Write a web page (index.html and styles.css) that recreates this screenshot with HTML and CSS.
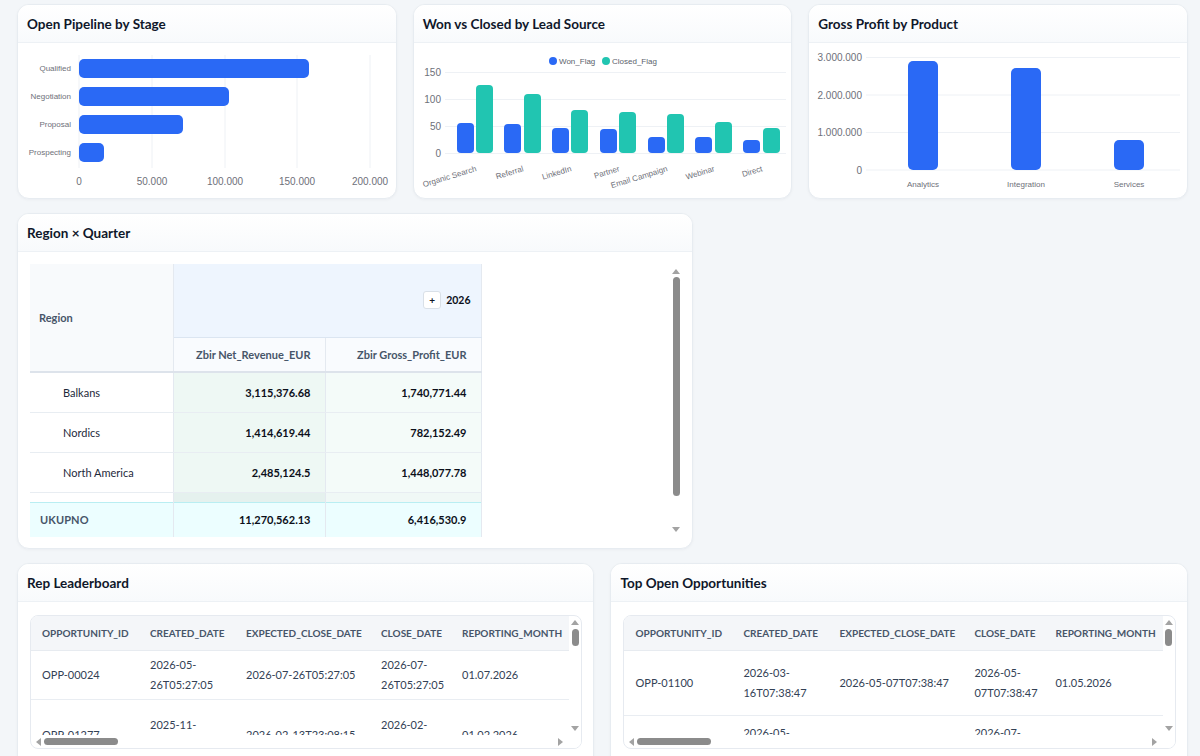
FILE: index.html
```html
<!DOCTYPE html>
<html lang="en">
<head>
<meta charset="utf-8">
<title>Sales Dashboard</title>
<link rel="stylesheet" href="styles.css">
</head>
<body>
<main class="dash">

  <section class="card span4">
    <header class="card-h"><h2>Open Pipeline by Stage</h2></header>
    <div class="card-b chart">
      <svg width="378" height="155" viewBox="0 0 378 155">
        <g class="grid">
          <line x1="61" y1="12" x2="61" y2="125"/>
          <line x1="134" y1="12" x2="134" y2="125"/>
          <line x1="207" y1="12" x2="207" y2="125"/>
          <line x1="279" y1="12" x2="279" y2="125"/>
          <line x1="352" y1="12" x2="352" y2="125"/>
        </g>
        <g class="bar-blue">
          <rect x="61" y="16" width="230" height="19" rx="5"/>
          <rect x="61" y="44" width="150" height="19" rx="5"/>
          <rect x="61" y="72" width="104" height="19" rx="5"/>
          <rect x="61" y="100" width="25" height="19" rx="5"/>
        </g>
        <g class="lbl-s" text-anchor="end">
          <text x="53" y="28">Qualified</text>
          <text x="53" y="56">Negotiation</text>
          <text x="53" y="84">Proposal</text>
          <text x="53" y="112">Prospecting</text>
        </g>
        <g class="lbl" text-anchor="middle">
          <text x="61" y="142">0</text>
          <text x="134" y="142">50.000</text>
          <text x="207" y="142">100.000</text>
          <text x="279" y="142">150.000</text>
          <text x="352" y="142">200.000</text>
        </g>
      </svg>
    </div>
  </section>

  <section class="card span4">
    <header class="card-h"><h2>Won vs Closed by Lead Source</h2></header>
    <div class="card-b chart">
      <svg width="378" height="155" viewBox="0 0 378 155">
        <g class="legend">
          <circle cx="139" cy="18" r="4" class="dot-blue"/>
          <text x="145" y="21">Won_Flag</text>
          <circle cx="192" cy="18" r="4" class="dot-teal"/>
          <text x="198" y="21">Closed_Flag</text>
        </g>
        <g class="grid">
          <line x1="31" y1="29.5" x2="372" y2="29.5"/>
          <line x1="31" y1="56.5" x2="372" y2="56.5"/>
          <line x1="31" y1="83.5" x2="372" y2="83.5"/>
          <line x1="31" y1="110.5" x2="372" y2="110.5"/>
        </g>
        <g class="lbl" text-anchor="end">
          <text x="27" y="33">150</text>
          <text x="27" y="60">100</text>
          <text x="27" y="87">50</text>
          <text x="27" y="114">0</text>
        </g>
        <g class="bar-blue">
          <rect x="43" y="80" width="17" height="30" rx="4"/>
          <rect x="90" y="81" width="17" height="29" rx="4"/>
          <rect x="138" y="85" width="17" height="25" rx="4"/>
          <rect x="186" y="86" width="17" height="24" rx="4"/>
          <rect x="234" y="94" width="17" height="16" rx="4"/>
          <rect x="281" y="94" width="17" height="16" rx="4"/>
          <rect x="329" y="97" width="17" height="13" rx="4"/>
        </g>
        <g class="bar-teal">
          <rect x="62" y="42" width="17" height="68" rx="4"/>
          <rect x="110" y="51" width="17" height="59" rx="4"/>
          <rect x="157" y="67" width="17" height="43" rx="4"/>
          <rect x="205" y="69" width="17" height="41" rx="4"/>
          <rect x="253" y="71" width="17" height="39" rx="4"/>
          <rect x="301" y="79" width="17" height="31" rx="4"/>
          <rect x="349" y="85" width="17" height="25" rx="4"/>
        </g>
        <g class="lbl-s" text-anchor="end">
          <text transform="translate(63 128) rotate(-17)">Organic Search</text>
          <text transform="translate(110 128) rotate(-17)">Referral</text>
          <text transform="translate(158 128) rotate(-17)">LinkedIn</text>
          <text transform="translate(206 128) rotate(-17)">Partner</text>
          <text transform="translate(254 128) rotate(-17)">Email Campaign</text>
          <text transform="translate(301 128) rotate(-17)">Webinar</text>
          <text transform="translate(349 128) rotate(-17)">Direct</text>
        </g>
      </svg>
    </div>
  </section>

  <section class="card span4">
    <header class="card-h"><h2>Gross Profit by Product</h2></header>
    <div class="card-b chart">
      <svg width="378" height="155" viewBox="0 0 378 155">
        <g class="grid">
          <line x1="57" y1="14.5" x2="371" y2="14.5"/>
          <line x1="57" y1="52" x2="371" y2="52"/>
          <line x1="57" y1="89.5" x2="371" y2="89.5"/>
          <line x1="57" y1="127" x2="371" y2="127"/>
        </g>
        <g class="lbl" text-anchor="end">
          <text x="53" y="18">3.000.000</text>
          <text x="53" y="55.5">2.000.000</text>
          <text x="53" y="93">1.000.000</text>
          <text x="53" y="130.5">0</text>
        </g>
        <g class="bar-blue">
          <rect x="99" y="18" width="30" height="109" rx="5"/>
          <rect x="202" y="25" width="30" height="102" rx="5"/>
          <rect x="305" y="97" width="30" height="30" rx="5"/>
        </g>
        <g class="lbl-s" text-anchor="middle">
          <text x="114" y="144">Analytics</text>
          <text x="217" y="144">Integration</text>
          <text x="320" y="144">Services</text>
        </g>
      </svg>
    </div>
  </section>

  <section class="card span7 pivot-card">
    <header class="card-h"><h2>Region × Quarter</h2></header>
    <div class="card-b pivot-body">
      <div class="pivot-view">
        <table class="pivot">
          <colgroup><col class="pc-region"><col class="pc-val"><col class="pc-val2"></colgroup>
          <thead>
            <tr class="ph1">
              <th rowspan="2" class="ph-region">Region</th>
              <th colspan="2" class="ph-year"><span class="year-wrap"><span class="plus-btn">+</span><span class="year">2026</span></span></th>
            </tr>
            <tr class="ph2">
              <th class="ph-measure">Zbir Net_Revenue_EUR</th>
              <th class="ph-measure">Zbir Gross_Profit_EUR</th>
            </tr>
          </thead>
          <tbody>
            <tr class="pr"><td class="pr-label">Balkans</td><td class="pv pv1">3,115,376.68</td><td class="pv pv2">1,740,771.44</td></tr>
            <tr class="pr"><td class="pr-label">Nordics</td><td class="pv pv1">1,414,619.44</td><td class="pv pv2">782,152.49</td></tr>
            <tr class="pr"><td class="pr-label">North America</td><td class="pv pv1">2,485,124.5</td><td class="pv pv2">1,448,077.78</td></tr>
            <tr class="pr-gap"><td class="pr-label"></td><td class="pv1g"></td><td class="pv2g"></td></tr>
          </tbody>
          <tfoot>
            <tr class="ptot"><td class="ptot-label">UKUPNO</td><td class="pv">11,270,562.13</td><td class="pv">6,416,530.9</td></tr>
          </tfoot>
        </table>
      </div>
      <div class="vscroll pivot-vs">
        <span class="arr arr-up"></span>
        <span class="vtrack"><span class="vthumb pivot-thumb"></span></span>
        <span class="arr arr-down"></span>
      </div>
    </div>
  </section>

  <section class="card row3-left">
    <header class="card-h"><h2>Rep Leaderboard</h2></header>
    <div class="card-b tbl-body">
      <div class="tbl-wrap">
        <div class="tbl-view">
          <table class="grid-tbl">
            <colgroup><col class="tc1"><col class="tc2"><col class="tc3"><col class="tc4"><col class="tc5"><col class="tc6"><col class="tc7"></colgroup>
            <thead><tr><th>OPPORTUNITY_ID</th><th>CREATED_DATE</th><th>EXPECTED_CLOSE_DATE</th><th>CLOSE_DATE</th><th>REPORTING_MONTH</th><th>REGION</th><th>STAGE</th></tr></thead>
            <tbody>
              <tr class="h49"><td>OPP-00024</td><td>2026-05-26T05:27:05</td><td class="nw">2026-07-26T05:27:05</td><td>2026-07-26T05:27:05</td><td>01.07.2026</td><td>Balkans</td><td>Closed Won</td></tr>
              <tr class="h72"><td>OPP-01277</td><td>2025-11-13T23:08:15</td><td class="nw">2026-02-13T23:08:15</td><td>2026-02-13T23:08:15</td><td>01.02.2026</td><td>Nordics</td><td>Closed Won</td></tr>
            </tbody>
          </table>
        </div>
        <div class="vscroll tbl-vs">
          <span class="arr arr-up"></span>
          <span class="vtrack"><span class="vthumb tbl-thumb"></span></span>
          <span class="arr arr-down"></span>
        </div>
        <div class="hscroll">
          <span class="arr arr-left"></span>
          <span class="htrack"><span class="hthumb"></span></span>
          <span class="arr arr-right"></span>
        </div>
        <div class="corner"></div>
      </div>
    </div>
  </section>

  <section class="card row3-right">
    <header class="card-h"><h2>Top Open Opportunities</h2></header>
    <div class="card-b tbl-body">
      <div class="tbl-wrap">
        <div class="tbl-view">
          <table class="grid-tbl">
            <colgroup><col class="tc1"><col class="tc2"><col class="tc3"><col class="tc4"><col class="tc5"><col class="tc6"><col class="tc7"></colgroup>
            <thead><tr><th>OPPORTUNITY_ID</th><th>CREATED_DATE</th><th>EXPECTED_CLOSE_DATE</th><th>CLOSE_DATE</th><th>REPORTING_MONTH</th><th>REGION</th><th>STAGE</th></tr></thead>
            <tbody>
              <tr class="h65"><td>OPP-01100</td><td>2026-03-16T07:38:47</td><td class="nw">2026-05-07T07:38:47</td><td>2026-05-07T07:38:47</td><td>01.05.2026</td><td>North America</td><td>Negotiation</td></tr>
              <tr class="h56"><td>OPP-00871</td><td>2026-05-02T11:14:32</td><td class="nw">2026-07-02T11:14:32</td><td>2026-07-02T11:14:32</td><td>01.07.2026</td><td>Balkans</td><td>Proposal</td></tr>
            </tbody>
          </table>
        </div>
        <div class="vscroll tbl-vs">
          <span class="arr arr-up"></span>
          <span class="vtrack"><span class="vthumb tbl-thumb"></span></span>
          <span class="arr arr-down"></span>
        </div>
        <div class="hscroll">
          <span class="arr arr-left"></span>
          <span class="htrack"><span class="hthumb"></span></span>
          <span class="arr arr-right"></span>
        </div>
        <div class="corner"></div>
      </div>
    </div>
  </section>

</main>
</body>
</html>
```

FILE: styles.css
```css
* { box-sizing: border-box; margin: 0; padding: 0; }

html, body {
  width: 1200px;
  height: 756px;
  overflow: hidden;
  background: #f3f6f9;
  font-family: Lato, "Liberation Sans", Arial, sans-serif;
  color: #0f172a;
}

.dash {
  display: grid;
  grid-template-columns: repeat(12, minmax(0, 1fr));
  grid-template-rows: 195px 336px 240px;
  column-gap: 16px;
  row-gap: 14px;
  padding: 4px 12px 0 17px;
}

.span4 { grid-column: span 4; }
.span7 { grid-column: 1 / span 7; }
.row3-left { grid-column: 1 / span 6; grid-row: 3; }
.row3-right { grid-column: 7 / span 6; grid-row: 3; }

.card {
  background: #fff;
  border: 1px solid #e7ecf1;
  border-radius: 12px;
  box-shadow: 0 1px 3px rgba(15, 23, 42, 0.04);
  overflow: hidden;
  display: flex;
  flex-direction: column;
  min-width: 0;
}

.card-h {
  flex: none;
  height: 38px;
  padding: 0 9px;
  display: flex;
  align-items: center;
  background: linear-gradient(#ffffff, #f8fafc);
  border-bottom: 1px solid #edf1f5;
}

.card-h h2 {
  font-size: 13.5px;
  font-weight: 700;
  color: #0f172a;
  letter-spacing: 0;
}

.card-b { flex: 1; min-height: 0; }

/* charts */
.chart svg { display: block; overflow: visible; }
.grid line { stroke: #eef1f5; stroke-width: 1; }
.bar-blue rect, .dot-blue { fill: #2a69f5; }
.bar-teal rect, .dot-teal { fill: #21c5b1; }
.lbl text { font-family: "Liberation Sans", Arial, sans-serif; font-size: 10px; fill: #6e7079; }
.lbl-s text, .legend text { font-family: "Liberation Sans", Arial, sans-serif; font-size: 8px; fill: #6e7079; }
.legend text { fill: #5b5f6b; }

/* pivot */
.pivot-body {
  display: flex;
  padding: 12px 10px 11px 12px;
}

.pivot-view { flex: 1; overflow: hidden; }

.pivot {
  border-collapse: collapse;
  table-layout: fixed;
  width: 451px;
}

.pc-region { width: 143px; }
.pc-val { width: 152px; }
.pc-val2 { width: 156px; }

.pivot th, .pivot td {
  font-size: 11px;
  border-right: 1px solid #e4e9f0;
}

.ph1 { height: 73px; }
.ph2 { height: 35px; }

.ph-region {
  background: #f8fafc;
  text-align: left;
  padding-left: 9px;
  font-size: 10px;
  font-weight: 700;
  color: #475569;
  border-bottom: 2px solid #dde3eb;
}

.ph-year {
  background: #eef5fe;
  text-align: right;
  padding-right: 10px;
  border-bottom: 1px solid #dbe5f1;
}

.year-wrap { display: inline-flex; align-items: center; gap: 5px; }

.plus-btn {
  width: 18px;
  height: 18px;
  display: inline-flex;
  align-items: center;
  justify-content: center;
  background: #fff;
  border: 1px solid #d9e0e8;
  border-radius: 3px;
  font-size: 10px;
  font-weight: 700;
  color: #111827;
}

.year { font-size: 10.5px; font-weight: 700; color: #0b0f19; }

.ph-measure {
  background: #f9fbfe;
  text-align: right;
  padding-right: 14px;
  font-size: 10px;
  font-weight: 700;
  color: #475569;
  border-bottom: 2px solid #dde3eb;
}

.pr { height: 40px; }
.pr td { border-bottom: 1px solid #e8edf2; }

.pr-label {
  padding-left: 33px;
  font-size: 11.5px;
  color: #1e293b;
  background: #fff;
}

.pv {
  text-align: right;
  padding-right: 14px;
  font-size: 11.5px;
  font-weight: 700;
  color: #0b0f19;
}

.pv1 { background: #eef8f4; }
.pv2 { background: #f4fbf9; }

.pr-gap { height: 10px; }
.pr-gap td { padding: 0; }
.pv1g { background: #e5f1ee; }
.pv2g { background: #f0f8f6; }

.ptot { height: 35px; }
.ptot td {
  background: #ecfeff;
  border-top: 1px solid #b9eef2;
}

.ptot-label {
  padding-left: 10px;
  font-size: 8.5px;
  font-weight: 700;
  color: #475569;
  letter-spacing: 0.1px;
}

/* fake scrollbars */
.vscroll {
  flex: none;
  width: 12px;
  display: flex;
  flex-direction: column;
  align-items: center;
}

.vtrack { flex: 1; width: 100%; display: flex; justify-content: center; }
.vthumb { display: block; width: 7px; background: #8b8b8b; border-radius: 4px; }

.arr { display: block; width: 0; height: 0; flex: none; }
.arr-up { border-left: 4px solid transparent; border-right: 4px solid transparent; border-bottom: 5px solid #a3a3a3; }
.arr-down { border-left: 4px solid transparent; border-right: 4px solid transparent; border-top: 5px solid #a3a3a3; }
.arr-left { border-top: 4px solid transparent; border-bottom: 4px solid transparent; border-right: 5px solid #a3a3a3; }
.arr-right { border-top: 4px solid transparent; border-bottom: 4px solid transparent; border-left: 5px solid #a3a3a3; }

.pivot-vs { padding: 5px 0 5px; }
.pivot-vs .vtrack { padding: 3px 0 29px; }
.pivot-thumb { height: 219px; }

/* data tables */
.tbl-body { padding: 13px 11px 0 12px; }

.tbl-wrap {
  display: grid;
  grid-template-columns: minmax(0, 1fr) 12px;
  grid-template-rows: 119px 13px;
  border: 1px solid #e6eaf0;
  border-radius: 8px;
  overflow: hidden;
  background: #fff;
}

.tbl-view { overflow: hidden; }

.grid-tbl {
  border-collapse: collapse;
  table-layout: fixed;
  width: 785px;
}

.tc1 { width: 108px; }
.tc2 { width: 96px; }
.tc3 { width: 135px; }
.tc4 { width: 81px; }
.tc5 { width: 125px; }
.tc6 { width: 120px; }
.tc7 { width: 120px; }

.grid-tbl th {
  height: 34px;
  padding: 0 11px;
  text-align: left;
  font-size: 10px;
  font-weight: 700;
  color: #475569;
  background: #f4f6f9;
  border-bottom: 1px solid #e7ebf0;
  white-space: nowrap;
}

.grid-tbl td {
  padding: 0 11px;
  font-size: 11px;
  line-height: 20px;
  color: #334155;
  vertical-align: middle;
  border-bottom: 1px solid #e9edf2;
}

.grid-tbl td.nw { white-space: nowrap; }

.h49 { height: 49px; }
.h72 { height: 72px; }
.h65 { height: 65px; }
.h56 { height: 56px; }

.tbl-vs { padding: 4px 0 4px; }
.tbl-vs .vtrack { padding: 4px 0; align-items: flex-start; }
.tbl-thumb { height: 17px; }

.hscroll {
  display: flex;
  align-items: center;
  padding: 0 6px 0 5px;
}

.htrack { flex: 1; height: 100%; display: flex; align-items: center; padding: 0 3px; }
.hthumb { display: block; width: 74px; height: 7px; background: #8b8b8b; border-radius: 4px; }

.corner { background: #fff; }
```
